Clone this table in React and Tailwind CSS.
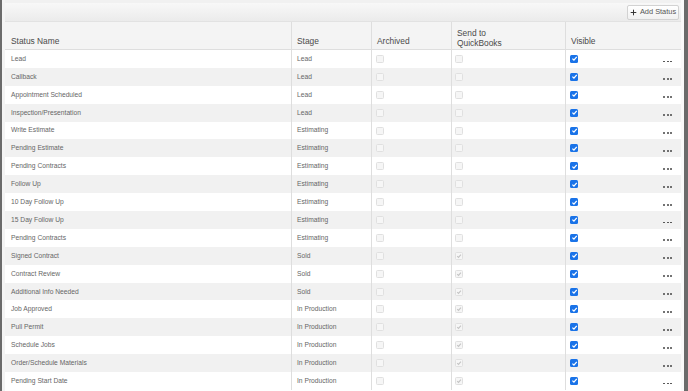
import React from "react";

const rows = [
  ["Lead", "Lead", false],
  ["Callback", "Lead", false],
  ["Appointment Scheduled", "Lead", false],
  ["Inspection/Presentation", "Lead", false],
  ["Write Estimate", "Estimating", false],
  ["Pending Estimate", "Estimating", false],
  ["Pending Contracts", "Estimating", false],
  ["Follow Up", "Estimating", false],
  ["10 Day Follow Up", "Estimating", false],
  ["15 Day Follow Up", "Estimating", false],
  ["Pending Contracts", "Estimating", false],
  ["Signed Contract", "Sold", true],
  ["Contract Review", "Sold", true],
  ["Additional Info Needed", "Sold", true],
  ["Job Approved", "In Production", true],
  ["Pull Permit", "In Production", true],
  ["Schedule Jobs", "In Production", true],
  ["Order/Schedule Materials", "In Production", true],
  ["Pending Start Date", "In Production", true],
];

function GrayBox({ checked }) {
  return (
    <div className="w-[8px] h-[8px] rounded-[1.5px] border border-[#e0e0e0] bg-[#f6f6f6] flex items-center justify-center">
      {checked && (
        <svg width="6" height="6" viewBox="0 0 10 10">
          <path d="M2 5.2 L4.2 7.4 L8.2 2.6" fill="none" stroke="#c4c4c4" strokeWidth="1.8" />
        </svg>
      )}
    </div>
  );
}

function BlueBox() {
  return (
    <div className="w-[8px] h-[8px] rounded-[1.5px] bg-[#1a73e8] flex items-center justify-center">
      <svg width="7" height="7" viewBox="0 0 10 10">
        <path d="M2 5.2 L4.2 7.4 L8.2 2.6" fill="none" stroke="#fff" strokeWidth="1.8" />
      </svg>
    </div>
  );
}

export default function App() {
  return (
    <div
      className="w-[688px] h-[391px] overflow-hidden bg-[#e6e6e6] flex"
      style={{ fontFamily: '"Liberation Sans", Arial, sans-serif' }}
    >
      <div className="w-[2px] bg-[#6b6b6b]" />
      <div className="w-[3px] bg-[#f4f4f4]" />
      <div className="flex-1 flex flex-col pt-[3px] bg-[#f1f1f1]">
        <div className="h-[19px] bg-gradient-to-b from-[#f8f8f8] to-[#ebebeb] flex items-center justify-end pr-[2px] border-b border-[#e2e2e2]">
          <div className="h-[15px] w-[52px] flex items-center justify-center gap-[3px] rounded-[2px] border border-[#d2d2d2] bg-gradient-to-b from-[#ffffff] to-[#f1f1f1] text-[7.4px] text-[#555]">
            <svg width="7" height="7" viewBox="0 0 10 10">
              <path d="M5 1 V9 M1 5 H9" stroke="#333" strokeWidth="1.4" />
            </svg>
            <span>Add Status</span>
          </div>
        </div>
        <div className="bg-white flex-1">
          <div className="flex h-[28px] bg-[#f4f4f4] border-b border-[#dedede] text-[8.4px] text-[#4a4a4a]">
            <div className="w-[287px] border-r border-[#dedede] flex items-end pl-[6px] pb-[1px]">Status Name</div>
            <div className="w-[80px] border-r border-[#dedede] flex items-end pl-[5px] pb-[1px]">Stage</div>
            <div className="w-[80px] border-r border-[#dedede] flex items-end pl-[5px] pb-[1px]">Archived</div>
            <div className="w-[114px] border-r border-[#dedede] flex items-end pl-[5px] pb-[1px] leading-[10px]">
              Send to
              <br />
              QuickBooks
            </div>
            <div className="flex-1 flex items-end pl-[5px] pb-[1px]">Visible</div>
          </div>
          {rows.map(([name, stage, qb], i) => (
            <div
              key={i}
              className={`flex h-[17.9px] text-[6.7px] text-[#666] ${i % 2 === 1 ? "bg-[#f1f1f1]" : "bg-white"}`}
            >
              <div className="w-[287px] border-r border-[#dedede] flex items-center pl-[6px]">{name}</div>
              <div className="w-[80px] border-r border-[#dedede] flex items-center pl-[5px]">{stage}</div>
              <div className="w-[80px] border-r border-[#dedede] flex items-center pl-[4px]">
                <GrayBox checked={false} />
              </div>
              <div className="w-[114px] border-r border-[#dedede] flex items-center pl-[3px]">
                <GrayBox checked={qb} />
              </div>
              <div className="flex-1 flex items-center pl-[4px] pr-[9px] justify-between">
                <BlueBox />
                <div className="flex gap-[1.6px] mt-[5px]">
                  <span className="w-[1.9px] h-[1.9px] rounded-full bg-[#444]" />
                  <span className="w-[1.9px] h-[1.9px] rounded-full bg-[#444]" />
                  <span className="w-[1.9px] h-[1.9px] rounded-full bg-[#444]" />
                </div>
              </div>
            </div>
          ))}
        </div>
      </div>
      <div className="w-[3px] bg-[#fafafa]" />
      <div className="w-[4px] bg-[#6b6b6b]" />
    </div>
  );
}
